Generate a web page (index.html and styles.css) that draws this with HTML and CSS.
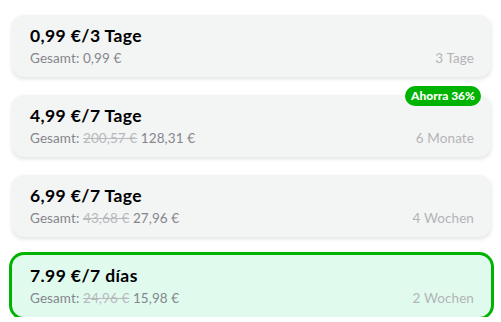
FILE: index.html
```html
<!DOCTYPE html>
<html>
<head>
<meta charset="utf-8">
<link rel="stylesheet" href="styles.css">
</head>
<body>
<div class="list">
  <div class="card">
    <div class="title">0,99 €/3 Tage</div>
    <div class="row">
      <span class="total">Gesamt: 0,99 €</span>
      <span class="period">3 Tage</span>
    </div>
  </div>
  <div class="card">
    <span class="badge">Ahorra 36%</span>
    <div class="title">4,99 €/7 Tage</div>
    <div class="row">
      <span class="total">Gesamt: <s>200,57 €</s> 128,31 €</span>
      <span class="period">6 Monate</span>
    </div>
  </div>
  <div class="card">
    <div class="title">6,99 €/7 Tage</div>
    <div class="row">
      <span class="total">Gesamt: <s>43,68 €</s> 27,96 €</span>
      <span class="period">4 Wochen</span>
    </div>
  </div>
  <div class="card selected">
    <div class="title">7.99 €/7 días</div>
    <div class="row">
      <span class="total">Gesamt: <s>24,96 €</s> 15,98 €</span>
      <span class="period">2 Wochen</span>
    </div>
  </div>
</div>
</body>
</html>
```
FILE: styles.css
```css
html, body {
  margin: 0;
  padding: 0;
  background: #ffffff;
}
body {
  font-family: Lato, "Noto Sans", sans-serif;
}
.list {
  display: flex;
  flex-direction: column;
  gap: 18px;
  padding: 15px 10px 0 12px;
}
.card {
  position: relative;
  height: 62px;
  box-sizing: border-box;
  padding: 11px 17px 0 18px;
  background: #f3f4f4;
  border-radius: 12px;
  box-shadow: 0 2px 4px rgba(0, 0, 0, 0.12);
}
.card.selected {
  background: #e0fbee;
  box-shadow: 0 0 0 3px #00b300;
}
.title {
  font-size: 17.5px;
  font-weight: 700;
  color: #000;
  line-height: 20px;
  letter-spacing: 0.4px;
}
.row {
  display: flex;
  justify-content: space-between;
  align-items: baseline;
  margin-top: 4px;
  font-size: 13.5px;
  line-height: 16px;
  letter-spacing: 0.1px;
}
.total {
  color: #85868c;
}
.total s {
  color: #b8b9bd;
}
.period {
  color: #b3b4b8;
}
.badge {
  position: absolute;
  top: -9px;
  right: 10px;
  height: 20px;
  padding: 0 6px;
  box-sizing: border-box;
  border-radius: 10px;
  background: #00b300;
  color: #fff;
  font-size: 12px;
  font-weight: 900;
  line-height: 20px;
}
```
